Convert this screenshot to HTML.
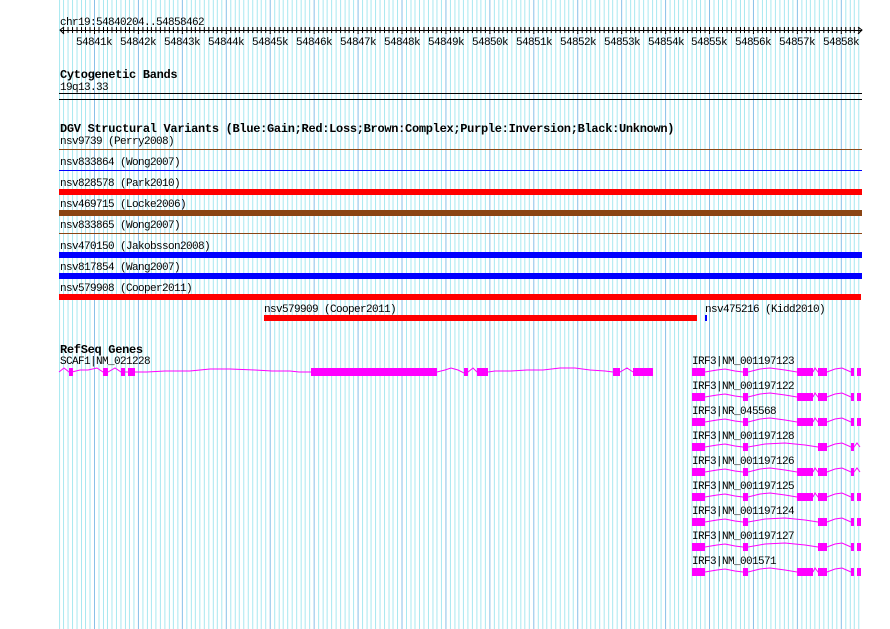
<!DOCTYPE html>
<html><head><meta charset="utf-8"><style>
html,body{margin:0;padding:0;background:#fff;width:890px;height:629px;overflow:hidden}
svg{display:block}
text{font-family:"Liberation Mono",monospace;font-size:11px;letter-spacing:-0.6px;fill:#000}
.b{font-weight:bold;font-size:12px;letter-spacing:-0.3px}
</style></head><body>
<svg width="890" height="629" viewBox="0 0 890 629" xmlns="http://www.w3.org/2000/svg" shape-rendering="crispEdges">
<defs>
<pattern id="g" patternUnits="userSpaceOnUse" x="94" y="0" width="43.93" height="629">
<rect x="0" y="0" width="1" height="629" fill="#88c0e8"/>
<rect x="4.39" y="0" width="1" height="629" fill="#a8e8f0"/>
<rect x="8.79" y="0" width="1" height="629" fill="#a8e8f0"/>
<rect x="13.18" y="0" width="1" height="629" fill="#a8e8f0"/>
<rect x="17.57" y="0" width="1" height="629" fill="#a8e8f0"/>
<rect x="21.97" y="0" width="1" height="629" fill="#a8e8f0"/>
<rect x="26.36" y="0" width="1" height="629" fill="#a8e8f0"/>
<rect x="30.75" y="0" width="1" height="629" fill="#a8e8f0"/>
<rect x="35.14" y="0" width="1" height="629" fill="#a8e8f0"/>
<rect x="39.54" y="0" width="1" height="629" fill="#a8e8f0"/>
</pattern>
<pattern id="t" patternUnits="userSpaceOnUse" x="94" y="0" width="43.93" height="40">
<rect x="0" y="25" width="1" height="10" fill="#000"/>
<rect x="4.39" y="27" width="1" height="6" fill="#000"/>
<rect x="8.79" y="27" width="1" height="6" fill="#000"/>
<rect x="13.18" y="27" width="1" height="6" fill="#000"/>
<rect x="17.57" y="27" width="1" height="6" fill="#000"/>
<rect x="21.97" y="27" width="1" height="6" fill="#000"/>
<rect x="26.36" y="27" width="1" height="6" fill="#000"/>
<rect x="30.75" y="27" width="1" height="6" fill="#000"/>
<rect x="35.14" y="27" width="1" height="6" fill="#000"/>
<rect x="39.54" y="27" width="1" height="6" fill="#000"/>
</pattern>
</defs>
<rect x="59" y="0" width="803" height="629" fill="url(#g)"/>
<text x="60" y="25">chr19:54840204..54858462</text>
<rect x="60" y="30" width="802" height="1" fill="#000"/>
<rect x="62" y="27" width="798" height="7" fill="url(#t)"/>
<path d="M64 27 L60 30 L64 34 M858 27 L862 30 L858 34" stroke="#000" fill="none" shape-rendering="auto"/>
<g text-anchor="middle">
<text x="94" y="45">54841k</text><text x="138" y="45">54842k</text><text x="182" y="45">54843k</text><text x="226" y="45">54844k</text><text x="270" y="45">54845k</text><text x="314" y="45">54846k</text><text x="358" y="45">54847k</text><text x="402" y="45">54848k</text><text x="446" y="45">54849k</text><text x="490" y="45">54850k</text><text x="534" y="45">54851k</text><text x="578" y="45">54852k</text><text x="622" y="45">54853k</text><text x="666" y="45">54854k</text><text x="709" y="45">54855k</text><text x="753" y="45">54856k</text><text x="797" y="45">54857k</text><text x="841" y="45">54858k</text>
</g>
<text class="b" x="60" y="78">Cytogenetic Bands</text>
<text x="60" y="90">19q13.33</text>
<rect x="59" y="93" width="803" height="1" fill="#000"/>
<rect x="59" y="99" width="803" height="1" fill="#000"/>
<text class="b" x="60" y="132">DGV Structural Variants (Blue:Gain;Red:Loss;Brown:Complex;Purple:Inversion;Black:Unknown)</text>
<text x="60" y="144">nsv9739 (Perry2008)</text>
<rect x="59" y="149" width="803" height="1" fill="#8b4513"/>
<text x="60" y="165">nsv833864 (Wong2007)</text>
<rect x="59" y="170" width="803" height="1" fill="#0000ff"/>
<text x="60" y="186">nsv828578 (Park2010)</text>
<rect x="59" y="189" width="803" height="6" fill="#ff0000"/>
<text x="60" y="207">nsv469715 (Locke2006)</text>
<rect x="59" y="210" width="803" height="6" fill="#8b4513"/>
<text x="60" y="228">nsv833865 (Wong2007)</text>
<rect x="59" y="233" width="803" height="1" fill="#8b4513"/>
<text x="60" y="249">nsv470150 (Jakobsson2008)</text>
<rect x="59" y="252" width="803" height="6" fill="#0000ff"/>
<text x="60" y="270">nsv817854 (Wang2007)</text>
<rect x="59" y="273" width="803" height="6" fill="#0000ff"/>
<text x="60" y="291">nsv579908 (Cooper2011)</text>
<rect x="59" y="294" width="802" height="6" fill="#ff0000"/>
<text x="264" y="312">nsv579909 (Cooper2011)</text>
<rect x="264" y="315" width="433" height="6" fill="#ff0000"/>
<text x="705" y="312">nsv475216 (Kidd2010)</text>
<rect x="705" y="315" width="2" height="6" fill="#0000ff"/>
<text class="b" x="60" y="353">RefSeq Genes</text>
<text x="60" y="364">SCAF1|NM_021228</text>
<text x="692" y="364">IRF3|NM_001197123</text>
<text x="692" y="389">IRF3|NM_001197122</text>
<text x="692" y="414">IRF3|NR_045568</text>
<text x="692" y="439">IRF3|NM_001197128</text>
<text x="692" y="464">IRF3|NM_001197126</text>
<text x="692" y="489">IRF3|NM_001197125</text>
<text x="692" y="514">IRF3|NM_001197124</text>
<text x="692" y="539">IRF3|NM_001197127</text>
<text x="692" y="564">IRF3|NM_001571</text>
<g fill="#ff00ff">
<polyline points="59,372 64,368 69,372 72,372 80,370 88,370 97,368 103,372 108,372 115,368 121,372 134,372 147,372 165,371 190,371 210,369 230,369 255,370 272,371 290,371 299,372 311,372" stroke="#ff00ff" fill="none" shape-rendering="auto"/>
<polyline points="437,372 445,370 451,368 458,370 464,373 468,372 473,368 477,372 488,372 495,371 511,371 527,370 543,370 560,368 575,368 590,370 605,371 613,372 620,372 627,368 633,372" stroke="#ff00ff" fill="none" shape-rendering="auto"/>
<rect x="69" y="368" width="4" height="8"/><rect x="103" y="368" width="5" height="8"/><rect x="121" y="368" width="4" height="8"/><rect x="128" y="368" width="7" height="8"/>
<rect x="311" y="368" width="126" height="8"/><rect x="464" y="368" width="4" height="8"/><rect x="477" y="368" width="11" height="8"/><rect x="613" y="368" width="7" height="8"/><rect x="633" y="368" width="20" height="8"/>
<g transform="translate(0,368)"><polyline points="705,4 717,2 725,1 735,3 743,4 748,4 760,1 770,0 785,2 797,4" stroke="#ff00ff" fill="none" shape-rendering="auto"/><polyline points="813,4 815,0 818,4 827,4 835,1 842,0 851,4" stroke="#ff00ff" fill="none" shape-rendering="auto"/><rect x="692" y="0" width="13" height="8"/><rect x="743" y="0" width="5" height="8"/><rect x="797" y="0" width="16" height="8"/><rect x="818" y="0" width="9" height="8"/><rect x="851" y="0" width="3" height="8"/><rect x="857" y="0" width="4" height="8"/></g>
<g transform="translate(0,393)"><polyline points="705,4 717,2 725,1 735,3 743,4 748,4 760,1 770,0 785,2 797,4" stroke="#ff00ff" fill="none" shape-rendering="auto"/><polyline points="813,4 815,0 818,4 827,4 835,1 842,0 851,4" stroke="#ff00ff" fill="none" shape-rendering="auto"/><rect x="692" y="0" width="13" height="8"/><rect x="743" y="0" width="5" height="8"/><rect x="797" y="0" width="16" height="8"/><rect x="818" y="0" width="9" height="8"/><rect x="851" y="0" width="3" height="8"/><rect x="857" y="0" width="4" height="8"/></g>
<g transform="translate(0,418)"><polyline points="705,4 717,2 725,1 735,3 743,4 748,4 760,1 770,0 785,2 797,4" stroke="#ff00ff" fill="none" shape-rendering="auto"/><polyline points="813,4 815,0 818,4 827,4 835,1 842,0 851,4" stroke="#ff00ff" fill="none" shape-rendering="auto"/><rect x="692" y="0" width="13" height="8"/><rect x="743" y="0" width="5" height="8"/><rect x="797" y="0" width="16" height="8"/><rect x="818" y="0" width="9" height="8"/><rect x="851" y="0" width="3" height="8"/><rect x="857" y="0" width="4" height="8"/></g>
<g transform="translate(0,443)"><polyline points="705,4 717,2 725,1 735,3 743,4 748,4 765,1 785,0 805,2 818,4" stroke="#ff00ff" fill="none" shape-rendering="auto"/><polyline points="827,4 835,1 842,0 851,4 854,4 857,0 860,4" stroke="#ff00ff" fill="none" shape-rendering="auto"/><rect x="692" y="0" width="13" height="8"/><rect x="743" y="0" width="5" height="8"/><rect x="818" y="0" width="9" height="8"/><rect x="851" y="0" width="3" height="8"/></g>
<g transform="translate(0,468)"><polyline points="705,4 717,2 725,1 735,3 743,4 748,4 760,1 770,0 785,2 797,4" stroke="#ff00ff" fill="none" shape-rendering="auto"/><polyline points="813,4 815,0 818,4 827,4 835,1 842,0 851,4 854,4 857,0 860,4" stroke="#ff00ff" fill="none" shape-rendering="auto"/><rect x="692" y="0" width="13" height="8"/><rect x="743" y="0" width="5" height="8"/><rect x="797" y="0" width="16" height="8"/><rect x="818" y="0" width="9" height="8"/><rect x="851" y="0" width="3" height="8"/></g>
<g transform="translate(0,493)"><polyline points="705,4 717,2 725,1 735,3 743,4 748,4 760,1 770,0 785,2 797,4" stroke="#ff00ff" fill="none" shape-rendering="auto"/><polyline points="813,4 815,0 818,4 827,4 835,1 842,0 851,4" stroke="#ff00ff" fill="none" shape-rendering="auto"/><rect x="692" y="0" width="13" height="8"/><rect x="743" y="0" width="5" height="8"/><rect x="797" y="0" width="16" height="8"/><rect x="818" y="0" width="9" height="8"/><rect x="851" y="0" width="3" height="8"/><rect x="857" y="0" width="4" height="8"/></g>
<g transform="translate(0,518)"><polyline points="705,4 717,2 725,1 735,3 743,4 748,4 765,1 785,0 805,2 818,4" stroke="#ff00ff" fill="none" shape-rendering="auto"/><polyline points="827,4 835,1 842,0 851,4" stroke="#ff00ff" fill="none" shape-rendering="auto"/><rect x="692" y="0" width="13" height="8"/><rect x="743" y="0" width="5" height="8"/><rect x="818" y="0" width="9" height="8"/><rect x="851" y="0" width="3" height="8"/><rect x="857" y="0" width="4" height="8"/></g>
<g transform="translate(0,543)"><polyline points="705,4 717,2 725,1 735,3 743,4 748,4 765,1 785,0 805,2 818,4" stroke="#ff00ff" fill="none" shape-rendering="auto"/><polyline points="827,4 835,1 842,0 851,4" stroke="#ff00ff" fill="none" shape-rendering="auto"/><rect x="692" y="0" width="13" height="8"/><rect x="743" y="0" width="5" height="8"/><rect x="818" y="0" width="9" height="8"/><rect x="851" y="0" width="3" height="8"/><rect x="857" y="0" width="4" height="8"/></g>
<g transform="translate(0,568)"><polyline points="705,4 717,2 725,1 735,3 743,4 748,4 760,1 770,0 785,2 797,4" stroke="#ff00ff" fill="none" shape-rendering="auto"/><polyline points="813,4 815,0 818,4 827,4 835,1 842,0 851,4" stroke="#ff00ff" fill="none" shape-rendering="auto"/><rect x="692" y="0" width="13" height="8"/><rect x="743" y="0" width="5" height="8"/><rect x="797" y="0" width="16" height="8"/><rect x="818" y="0" width="9" height="8"/><rect x="851" y="0" width="3" height="8"/><rect x="857" y="0" width="4" height="8"/></g>
</g>
</svg>
</body></html>
